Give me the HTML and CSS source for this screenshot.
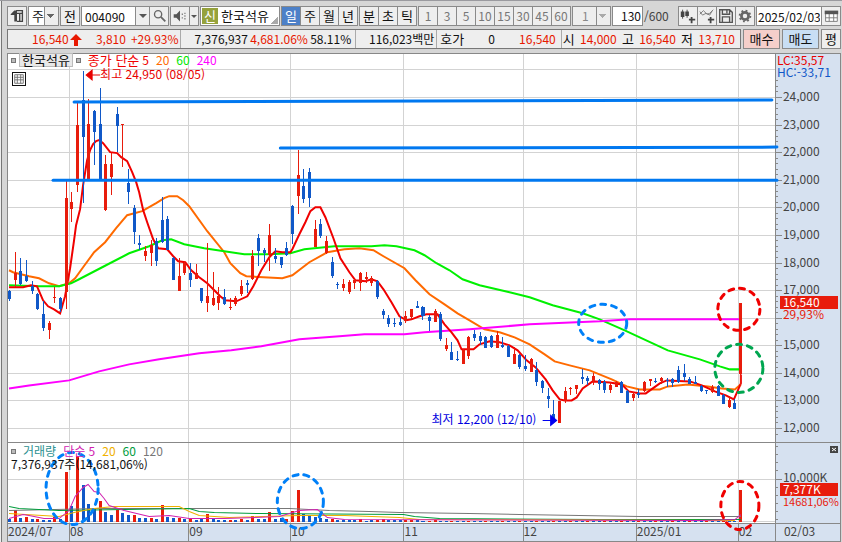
FILE: index.html
```
<!DOCTYPE html>
<html lang="ko">
<head>
    <meta charset="UTF-8">
    <meta name="viewport" content="width=device-width, initial-scale=1.0">
    <title>한국석유 - 주식 차트</title>
    <link rel="stylesheet" href="styles.css">
</head>
<body>

    <header class="toolbar">
        <button class="btn icon-btn" aria-label="패널">
            <svg viewBox="0 0 20 20"><path d="M9 4h7v12h-6M10 7h6M13 7v9" fill="none" stroke="#444" stroke-width="1.5"/><path d="M3 8l4-4h3v12H7V9H3z" fill="#444"/></svg>
        </button>
        <select class="select period" aria-label="주기"><option>주</option></select>
        <button class="btn">전</button>
        <div class="group">
            <input class="code" type="text" value="004090" aria-label="종목코드">
            <button class="drop" aria-label="종목 목록"></button>
            <button class="btn icon-btn" aria-label="검색">
                <svg viewBox="0 0 20 20"><circle cx="9" cy="8" r="4" fill="none" stroke="#666" stroke-width="1.5"/><path d="M12 11l5 5" stroke="#666" stroke-width="2"/></svg>
            </button>
        </div>
        <div class="group">
            <button class="btn icon-btn" aria-label="소리">
                <svg viewBox="0 0 20 20"><path d="M3 8h3l4-4v12l-4-4H3z" fill="#555"/><path d="M12 8h1M12 12h1M15 7h1M15 10h1M15 13h1" stroke="#555" stroke-width="1.5"/></svg>
            </button>
            <button class="drop narrow" aria-label="소리 설정"></button>
        </div>
        <div class="stock"><span class="tag">신</span><span>한국석유</span></div>
        <div class="group tabs">
            <button class="btn active">일</button>
            <button class="btn">주</button>
            <button class="btn">월</button>
            <button class="btn">년</button>
        </div>
        <div class="group tabs">
            <button class="btn">분</button>
            <button class="btn">초</button>
            <button class="btn">틱</button>
        </div>
        <div class="group tabs off">
            <button class="btn">1</button>
            <button class="btn">3</button>
            <button class="btn">5</button>
            <button class="btn">10</button>
            <button class="btn">15</button>
            <button class="btn">30</button>
            <button class="btn">45</button>
            <button class="btn">60</button>
        </div>
        <select class="select minute" aria-label="분 단위" disabled><option>1</option></select>
        <div class="count">
            <input type="text" value="130" aria-label="봉 개수"><span>/600</span>
        </div>
        <div class="group tools">
            <button class="btn" aria-label="차트 추가">
                <svg viewBox="0 0 20 20"><path d="M4 3v10M9 3v9" stroke="#444"/><path d="M2 5h4v6H2zM7 5h4v5H7z" fill="#444"/><path d="M14 11v7M11 14h7" stroke="#444" stroke-width="2"/></svg>
            </button>
            <button class="btn" aria-label="지표 추가">
                <svg viewBox="0 0 20 20"><path d="M2 8l4-4 4 4 3-1 4-4M2 5l3 4 4-2 4 2 3-5" fill="none" stroke="#777"/><path d="M14 11v7M11 14h7" stroke="#444" stroke-width="2"/></svg>
            </button>
            <button class="btn" aria-label="저장">
                <svg viewBox="0 0 20 20"><path d="M3 3h11l3 3v11H3zM6 3v5h8V3M6 17v-6h8v6M11 4v3" fill="none" stroke="#555" stroke-width="1.5"/></svg>
            </button>
            <button class="btn" aria-label="설정">
                <svg viewBox="0 0 20 20"><circle cx="10" cy="10" r="4" fill="none" stroke="#666" stroke-width="3"/><circle cx="10" cy="10" r="6" fill="none" stroke="#666" stroke-width="2" stroke-dasharray="2 2.7"/></svg>
            </button>
        </div>
        <div class="group">
            <input class="date" type="text" value="2025/02/03" aria-label="날짜">
            <button class="btn icon-btn" aria-label="달력">
                <svg viewBox="0 0 20 20"><path d="M4 5h13v11H4zM4 12h13M8 6v10M13 6v10" fill="#fff" stroke="#777"/><path d="M3 4h15v4H3z" fill="#555"/></svg>
            </button>
        </div>
    </header>

    <section class="quote">
        <div class="cells">
            <div class="cell price">
                <span class="up">16,540<svg class="arrow" viewBox="0 0 12 12"><path d="M6 0l6 6H8v6H4V6H0z" fill="#e81800"/></svg></span>
                <span class="up change">3,810</span>
                <span class="up">+29.93%</span>
            </div>
            <div class="cell volume">
                <span>7,376,937</span>
                <span class="up">4,681.06%</span>
                <span>58.11%</span>
            </div>
            <div class="cell amount"><span>116,023백만</span></div>
            <div class="cell ask"><span class="label">호가</span><span>0</span><span class="up">16,540</span></div>
            <div class="cell range">
                <span class="label">시</span><span class="up">14,000</span>
                <span class="label">고</span><span class="up">16,540</span>
                <span class="label">저</span><span class="up">13,710</span>
            </div>
        </div>
        <button class="btn buy">매수</button>
        <button class="btn sell">매도</button>
        <button class="btn avg">평</button>
    </section>

    <main class="chart">
        <svg id="plot" viewBox="8 53 833 488" role="img" aria-label="한국석유 일봉 차트"></svg>

        <div class="legend price-legend">
            <i class="box"></i><span class="name">한국석유</span><i class="box"></i>
            <span class="ma-title">종가 단순</span>
            <span class="ma5">5</span><span class="ma20">20</span><span class="ma60">60</span><span class="ma240">240</span>
        </div>
        <button class="grid-btn" aria-label="표 보기">
            <svg viewBox="0 0 14 14"><path d="M2 2h10v10H2zM2 5h10M2 8h10M5 2v10M9 2v10" fill="none" stroke="#666"/></svg>
        </button>
        <div class="legend volume-legend">
            <i class="box"></i><span class="vol-title">거래량</span>
            <span class="vma5">단순 5</span><span class="vma20">20</span><span class="vma60">60</span><span class="vma120">120</span>
        </div>
        <p class="volume-now">7,376,937주(14,681,06%)</p>
        <button class="close" aria-label="닫기">
            <svg viewBox="0 0 8 7"><path d="M2 2l4 3M6 2L2 5" stroke="#fff"/></svg>
        </button>
    </main>

    <script src="chart.js"></script>
</body>
</html>
```
FILE: styles.css
```
* {
    box-sizing: border-box;
}
body {
    margin: 0;
    padding: 5px 1px 0 7px;
    background: #d6d6d6;
    border-top: 1px solid #9a9a9f;
    color: #111;
    font: 12px/16px "Noto Sans CJK KR", sans-serif;
    box-shadow: inset 1px 0 #eee, inset 2px 0 #777;
}
button, input, select {
    font: inherit;
    color: inherit;
    border-radius: 0;
    margin: 0;
}
svg {
    display: block;
}

/* toolbar */
.toolbar {
    display: flex;
    gap: 1px;
    height: 20px;
}
.group {
    display: flex;
    flex: none;
}
.btn, .select, .drop, .toolbar input {
    flex: none;
    height: 20px;
    padding: 0;
    border: 1px solid #8a8a8a;
    background: #eee;
}
.btn {
    width: 20px;
    text-align: center;
    font-size: 13px;
}
.btn svg {
    width: 18px;
    height: 18px;
}
.group > * + * {
    margin-left: -1px;
}
.toolbar input {
    background: #fff;
    padding: 0 3px;
}
.toolbar .code {
    width: 55px;
}
.drop {
    width: 15px;
}
.drop::after {
    content: "";
    display: block;
    margin: auto;
    width: 0;
    border: 4px solid transparent;
    border-top-color: #555;
    border-bottom: 0;
}
.narrow {
    width: 10px;
}
.narrow::after {
    border-width: 3px;
    border-bottom: 0;
    margin-left: 1px;
}
.select {
    appearance: none;
    padding: 0 3px;
    font-size: 13px;
    background-color: #fff;
    background-image: linear-gradient(to bottom left, #666 50%, transparent 50%), linear-gradient(to bottom right, #666 50%, transparent 50%), linear-gradient(to right, #8a8a8a 1px, #eee 1px);
    background-repeat: no-repeat;
    background-size: 4px 4px, 4px 4px, 14px 20px;
    background-position: right 7px top 7px, right 3px top 7px, right top;
}
.period {
    width: 31px;
}
.minute {
    width: 39px;
    padding-left: 9px;
    font-size: 12px;
    color: #888;
    background-color: #eee;
    background-image: linear-gradient(to bottom left, #aaa 50%, transparent 50%), linear-gradient(to bottom right, #aaa 50%, transparent 50%), linear-gradient(to right, #8a8a8a 1px, #eee 1px);
    opacity: 1;
}
.stock {
    flex: 1;
    min-width: 76px;
    display: flex;
    gap: 3px;
    padding: 1px;
    font-size: 13px;
    white-space: nowrap;
    border: 1px solid #8a8a8a;
    background: linear-gradient(135deg, transparent 50%, #aaa 50%) no-repeat right 1px bottom 1px / 7px 7px #fff;
}
.tag {
    width: 16px;
    text-align: center;
    color: #fff;
    background: #96a23c;
}
.tabs .active {
    color: #fff;
    background: #4c80c8;
}
.off .btn {
    color: #777;
    font-size: 12px;
}
.count {
    display: flex;
    flex: none;
    gap: 1px;
    width: 65px;
    line-height: 20px;
    color: #444;
}
.toolbar .count input {
    width: 31px;
    padding: 0 1px;
    text-align: right;
    color: #111;
}
.toolbar .date {
    width: 66px;
    padding: 0 1px;
}

/* quote row */
.quote {
    display: flex;
    gap: 2px;
    height: 20px;
    margin-top: 3px;
}
.cells {
    flex: 1;
    display: flex;
    border: 1px solid #777;
    background: #eee;
    line-height: 18px;
    white-space: nowrap;
}
.cell {
    display: flex;
    justify-content: space-between;
    padding: 0 3px;
    border-right: 1px solid #aaa;
}
.cell:last-child {
    border-right: 0;
}
.cell.price {
    flex: 160;
    gap: 5px;
    padding-left: 24px;
    padding-right: 1px;
}
.change {
    margin-left: auto;
}
.cell.volume {
    flex: 171;
    padding: 0 4px 0 14px;
}
.cell.amount {
    flex: 82;
    justify-content: flex-end;
    padding-right: 2px;
}
.cell.ask {
    flex: 126;
    padding-right: 5px;
}
.cell.range {
    flex: 188;
    padding: 0 5px 0 1px;
}
.label {
    font-size: 13px;
}
.up {
    color: #e81800;
}
.arrow {
    display: inline-block;
    width: 12px;
    height: 12px;
    margin-left: 1px;
    vertical-align: -2px;
}
.quote .btn {
    width: 37px;
}
.quote .buy {
    background: #f5cfca;
}
.quote .sell {
    background: #c8def4;
}
.quote .avg {
    width: 20px;
}

/* chart */
.chart {
    position: relative;
    margin-top: 4px;
}
#plot {
    width: 100%;
    height: auto;
}
#plot text {
    font-size: 12px;
}
#plot .small {
    font-size: 11px;
}
#plot rect {
    shape-rendering: crispEdges;
}
.legend {
    position: absolute;
    left: 4px;
    display: flex;
    align-items: center;
    line-height: 14px;
    white-space: nowrap;
}
.price-legend {
    top: 0;
    gap: 3px;
}
.volume-legend {
    top: 391px;
    gap: 7px;
}
.box {
    width: 5px;
    height: 5px;
    border: 1px solid #777;
    background: #bbb;
}
.name {
    padding: 0 2px;
    border: 1px solid #bbb;
    background: #e8e8e8;
    font-size: 13px;
    line-height: 12px;
}
.ma-title {
    margin-left: 4px;
    font-size: 13px;
}
.ma-title, .ma5 { color: #f00000; }
.ma20 { color: #ff6a00; margin-left: 4px; }
.ma60 { color: #00e800; margin-left: 4px; }
.ma240 { color: #f0f; margin-left: 4px; }
.vol-title { color: #2a9090; }
.vma5 { color: #d020b0; }
.vma20 { color: #f0b000; }
.vma60 { color: #009c3c; }
.vma120 { color: #777; }
.grid-btn {
    position: absolute;
    top: 19px;
    left: 5px;
    width: 14px;
    height: 14px;
    padding: 0;
    border: 1px solid #111;
    background: #fff;
}
.grid-btn svg {
    width: 12px;
    height: 12px;
}
.volume-now {
    position: absolute;
    top: 403px;
    left: 4px;
    margin: 0;
}
.close {
    position: absolute;
    top: 393px;
    right: 3px;
    width: 8px;
    height: 7px;
    padding: 0;
    border: 0;
    background: #444;
}
```
FILE: chart.js
```
const RED = '#e81c0c';
const BLUE = '#1058c8';

// colour, high, body top, body bottom, low
const candles = `
b 290 291 299 301|r 252 273 280 287|b 258 271 284 285|b 260 276 281 282|b 281 286 291 294|b 293 294 309 310|b 301 314 328 331|r 321 323 330 339|r 287 297 298 303|b 297 298 309 312
r 181 198 292 309|r 192 202 209 222|r 103 125 185 192|b 71 100 137 203|r 99 124 180 180|b 110 111 132 165|b 88 124 180 180|r 155 164 210 211|r 153 164 177 195|b 107 114 126 152
r 124 124 125 167|b 169 183 192 204|b 205 208 232 244|b 235 243 245 250|r 246 251 256 261|r 240 245 253 266|b 238 241 261 266|b 197 220 242 243|b 216 219 250 250|b 257 258 280 280
r 258 276 291 291|r 261 263 273 275|b 263 273 280 287|r 264 273 279 279|b 288 288 301 303|r 243 296 303 312|r 272 298 305 306|r 287 296 303 310|b 289 297 304 305|r 298 307 308 310
r 296 298 304 306|r 280 286 294 296|b 280 283 285 293|r 250 256 279 280|b 234 238 251 266|b 248 250 253 262|r 224 235 255 271|b 248 256 259 263|b 257 257 265 268|b 242 248 255 256
b 205 206 234 244|r 150 175 196 214|b 169 186 199 203|b 168 172 198 207|r 220 229 247 247|b 219 224 236 238|r 236 241 253 254|b 257 262 276 278|b 282 284 285 289|r 279 284 288 291
r 280 282 292 294|r 279 280 283 289|r 272 273 283 291|r 272 277 279 283|r 276 278 283 286|b 280 281 297 299|b 309 311 315 319|b 315 318 324 327|b 318 323 324 327|b 316 322 325 326
r 311 316 321 323|r 309 309 317 319|b 301 306 308 308|b 306 307 316 320|b 315 317 321 331|r 309 311 322 322|b 312 314 339 341|r 338 345 349 351|b 342 352 360 360|b 351 359 360 361
r 349 350 364 364|r 336 337 356 359|b 330 334 338 341|b 332 336 341 345|b 336 337 348 348|b 335 336 347 348|r 331 335 348 348|b 337 345 347 348|b 345 346 357 357|r 347 354 364 364
b 354 355 367 369|b 355 366 369 371|r 358 359 372 372|b 362 370 382 386|b 380 381 388 393|b 388 396 399 408|b 400 414 420 420|r 401 401 423 423|r 387 391 401 403|r 387 388 389 395
r 385 385 389 394|b 369 377 379 384|b 376 378 381 385|r 373 376 381 385|b 379 380 384 390|b 380 382 390 393|r 382 385 390 393|r 381 382 387 387|b 381 382 393 393|b 390 391 403 403
r 392 394 398 401|b 389 393 395 398|r 381 382 391 392|r 379 379 381 386|b 378 381 382 383|r 377 378 381 384|b 378 380 381 387|b 378 379 383 387|b 366 370 382 383|b 364 373 377 381
b 377 379 384 384|b 376 382 384 384|b 385 386 391 392|b 390 390 391 394|r 385 387 392 393|b 385 386 396 396|b 394 395 404 404|r 396 400 407 408|b 399 403 409 409|r 303 303 374 386
`.trim().split(/[|\n]/).map(row => row.split(' '));

// bar heights, minus = volume down
const volumes = [-3, 12, -4, 5, -3, 3, -2, -2, 5, -3, 49, -16, 65, -37, -18, -14, 21, -10, -7, 12,
    -9, -7, 7, -4, -4, 4, -3, 17, -5, -4, 4, -3, 3, -2, -3, 8, -3, -2, -2, 2,
    -2, 3, -2, 6, -3, -3, 10, -3, -4, 3, 11, 32, -8, -7, -5, -4, -3, 3, -2, -2,
    -2, -2, 3, -1, -2, 2, 3, -2, -2, -2, 2, 2, -2, -1, 1, 2];

const lines = [
    ['#ff6a00', 2, '10,270 14,272 30,276 40,278 50,283 60,286 70,283 76,278 84,267 95,252 106,242 117,228 128,215 143,211 157,203 165,198 170,196 178,196 184,200 190,206 208,231 225,252 231,263 241,273 247,276 264,277 283,278 293,275 310,262 328,252 345,249 360,248 374,250 384,256 405,268 416,280 430,294 445,304 458,313 470,320 485,329 500,332 515,337 530,344 545,354 555,361 570,365 590,370 612,379 627,386 640,389 660,389 668,386 688,384 708,386 722,388 735,389 741,384'],
    ['#00f000', 2, '10,285 40,286 60,286 72,283 80,279 105,266 130,253 150,246 163,240 172,239 185,244 205,248 225,251 245,254 270,254 291,253 305,249 335,246 372,246 385,245 397,246 415,250 425,255 437,263 450,270 463,279 480,285 510,292 530,297 553,305 583,313 600,319 625,330 640,337 668,350 700,359 720,366 730,369 741,369'],
    ['#ff00ff', 2, '10,388 30,385 70,380 100,371 130,364 160,359 200,353 232,350 262,346 300,339 340,336 365,334 405,334 425,332 470,329 530,324 600,321 630,319 741,319'],
    ['#f00000', 2, '10,287 24,287 32,285 38,286 44,300 49,306 55,309 61,313 66,296 71,268 75,240 77,225 81,209 84,185 88,160 91,150 94,144 97,141 100,140 104,143 111,152 118,153 122,157 128,161 133,172 137,182 140,192 144,210 148,222 154,239 159,248 168,249 174,256 179,261 186,262 192,270 200,277 208,283 214,289 221,296 226,300 237,301 248,296 254,286 262,270 270,257 276,251 283,252 291,252 293,249 300,234 306,222 311,211 316,207 321,207 326,217 334,238 341,258 350,272 356,280 366,281 372,279 378,281 384,289 392,302 400,316 407,320 412,319 420,316 427,314 438,314 445,324 452,332 458,340 462,349 474,349 480,344 490,341 500,342 510,345 518,350 527,360 536,367 546,379 553,390 560,399 565,400 572,400 577,397 583,388 593,381 610,382 622,384 629,391 640,393 646,393 660,383 667,380 690,381 702,385 715,391 726,395 734,399 738,390 741,383 741,374'],
    ['#777', 1, '10,510 100,508 290,508 330,510 370,511 400,512 470,513 520,514 640,516 741,516'],
    ['#009c3c', 1, '10,506 20,508 60,510 190,508 200,511 215,512 260,513 404,514 415,516 440,518 600,519 741,519'],
    ['#f0b000', 1, '10,513 60,516 75,512 95,508 115,506 180,506 190,511 200,515 230,517 300,515 345,515 400,517 420,519 735,520'],
    ['#d020b0', 1, '10,518 24,514 30,515 45,518 60,518 70,510 76,496 84,487 89,484 95,491 100,492 105,498 110,505 125,510 150,516 170,515 190,518 225,518 280,516 300,510 318,509 328,517 345,519 700,520 735,519 741,514']
];

const months = [[70, '08'], [189, '09'], [291, '10'], [404, '11'], [523, '12'], [636, '2025/01'], [738, '02']];

const circles = [
    [73, 488, 26, 36, '#0080f8'], [301, 501, 23, 27, '#0080f8'], [603, 323, 24, 19, '#0080f8'],
    [740, 505, 19, 24, '#f00000'], [739, 309, 21, 21, '#f00000'], [739, 368, 24, 24, '#00a650']
];

const rect = (x, y, w, h, fill) => `<rect x="${x}" y="${y}" width="${w}" height="${h}" fill="${fill}"/>`;
const text = (x, y, s, fill = '#444', cls = '') => `<text class="${cls}" x="${x}" y="${y}" fill="${fill}">${s}</text>`;
const priceY = p => Math.round(97 + (24000 - p) * 331 / 12000);
const barX = i => Math.round(10 + i * 5.66);

let out = rect(8, 53, 768, 469, '#fff') + rect(776, 53, 65, 469, '#d6e1f0') + rect(8, 523, 833, 18, '#d6e1f0');

// grid and price axis
for (let p = 12000; p <= 25000; p += 1000) {
    const y = priceY(p);
    out += rect(8, y, 767, 1, '#d3d3d3');
    if (p < 25000) {
        out += rect(776, y, 6, 1, '#888');
        if (p !== 16000) out += text(783, y + 4, p.toLocaleString('en-US'));
    }
}
for (let p = 11800; p <= 24600; p += 200) out += rect(776, priceY(p), 2, 1, '#888');
out += rect(8, 478, 767, 1, '#d3d3d3') + rect(8, 520, 767, 1, '#d3d3d3') + rect(776, 478, 6, 1, '#888');
for (let y = 446; y < 521; y += 8) out += rect(776, y, 2, 1, '#888');
months.forEach(([x]) => out += rect(x, 53, 1, 469, '#d3d3d3') + rect(x, 523, 1, 17, '#888'));

volumes.length = 130;
for (let i = 0; i < 130; i++) {
    const v = i === 129 ? 32 : volumes[i] || (i % 3 ? -1 : 1);
    out += rect(barX(i) - 1, 521 - Math.abs(v), 3, Math.abs(v), v > 0 ? RED : BLUE);
}
lines.forEach(([c, w, pts]) => out += `<polyline points="${pts}" fill="none" stroke="${c}" stroke-width="${w}"/>`);
candles.forEach(([c, hi, top, bottom, lo], i) => {
    const color = c === 'r' ? RED : BLUE;
    out += rect(barX(i), hi, 1, lo - hi, color) + rect(barX(i) - 1, top, 3, Math.max(1, bottom - top), color);
});

// frame
out += rect(8, 53, 833, 1, '#888') + rect(8, 442, 833, 1, '#888') + rect(8, 522, 833, 1, '#888') + rect(8, 540, 833, 1, '#888')
    + rect(8, 53, 1, 488, '#888') + rect(775, 53, 1, 488, '#888') + rect(840, 53, 1, 488, '#888');

// resistance lines
[[75, 102, 772, 100], [281, 148, 777, 147], [54, 180, 777, 180]].forEach(([a, b, c, d]) =>
    out += `<path d="M${a} ${b}L${c} ${d}" stroke="#0078f0" stroke-width="3" stroke-linecap="round"/>`);

out += text(101, 79, '최고 24,950 (08/05)', '#e80000') + '<path d="M87 75l6-5v10zM93 75h8" fill="#e80000" stroke="#e80000"/>';
out += text(432, 424, '최저 12,200 (12/10)', '#0000e0') + '<path d="M557 420l-6-5v10zM551 420h-8" fill="#0000f0" stroke="#0000f0"/>';

// axis labels
out += text(777, 65, 'LC:35,57', '#e80000') + text(777, 77, 'HC:-33,71', '#1058c8');
out += rect(780, 296, 58, 13, RED) + text(783, 307, '16,540', '#fff') + text(783, 319, '29,93%', RED);
out += text(783, 482, '10,000K') + rect(780, 482, 58, 13, RED) + text(783, 493, '7,377K', '#fff') + text(783, 505, '14681,06%', RED, 'small');
out += text(9, 535, '2024/07') + text(784, 535, '02/03');
months.forEach(([x, label]) => out += text(x + 1, 535, label));

circles.forEach(([x, y, rx, ry, c]) =>
    out += `<ellipse cx="${x}" cy="${y}" rx="${rx}" ry="${ry}" fill="none" stroke="${c}" stroke-width="3" stroke-dasharray="5 6" stroke-linecap="round"/>`);

document.getElementById('plot').innerHTML = out;
```
